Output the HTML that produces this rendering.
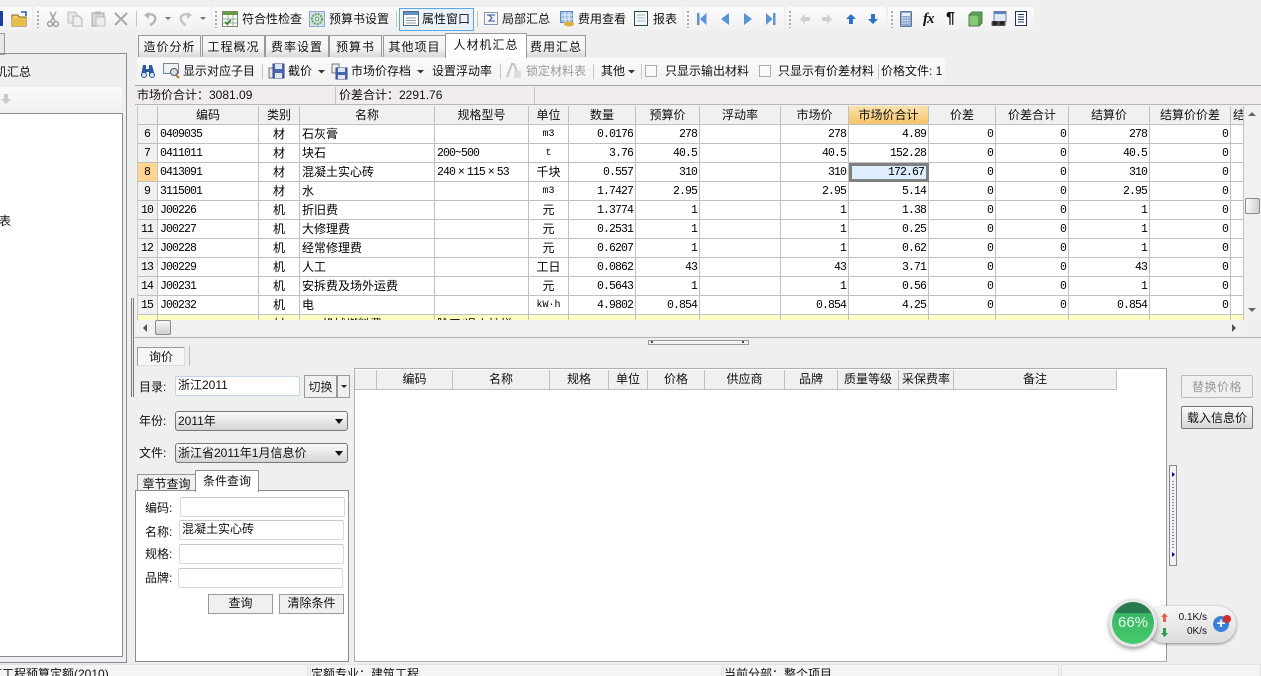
<!DOCTYPE html>
<html lang="zh"><head><meta charset="utf-8"><title>人材机汇总</title>
<style>
html,body{margin:0;padding:0}
body{width:1261px;height:676px;overflow:hidden;background:#f0efef;position:relative;font:12px/14px "Liberation Sans","Noto Sans CJK SC",sans-serif;color:#111}
.a{position:absolute;white-space:nowrap}
.t{position:absolute;white-space:nowrap;line-height:14px;height:14px}
.g{position:absolute;top:7px;height:23px;background:linear-gradient(#fcfcfc,#f1f1f1);border-radius:3px}
.grip{position:absolute;width:2px;height:17px;background:repeating-linear-gradient(#aaa 0 2px,transparent 2px 4px)}
.sep{position:absolute;width:1px;background:#c6c6c6}
svg{position:absolute;overflow:visible}
.tab{position:absolute;top:35px;height:21px;border:1px solid #999;border-bottom:0;background:linear-gradient(#f6f6f6 55%,#d8d8d8);text-align:center;line-height:22px;letter-spacing:1px;box-sizing:content-box}
#grid{position:absolute;left:137px;top:106px;width:1107px;height:214px;overflow:hidden;background:#fff;border-left:1px solid #c8c8c8;box-sizing:border-box}
#grid table{border-collapse:separate;border-spacing:0;table-layout:fixed;width:1107px;margin-left:-1px}
#grid td,#grid th{height:19px;box-sizing:border-box;border-right:1px solid #c0c0c0;border-bottom:1px solid #c0c0c0;padding:0 2px;overflow:hidden;white-space:nowrap;font-weight:400;font-size:12px;line-height:17px}
#grid th{background:#f0f0f0;text-align:center}
#grid td{font-family:"Liberation Mono","Noto Sans CJK SC",monospace;font-size:11.500px;letter-spacing:-.9px;background:#fff;color:#000}
#grid td.h{background:#f0f0f0;text-align:center}
#grid td.c{text-align:center;font-family:"Liberation Sans","Noto Sans CJK SC",sans-serif;font-size:12px;letter-spacing:0}
#grid td.z{font-family:"Liberation Sans","Noto Sans CJK SC",sans-serif;font-size:12px;letter-spacing:0}
#grid td.u{text-align:center;font-size:10px;letter-spacing:0}
#grid td.r{text-align:right}
#grid tr.y td{background:#ffffc4}
.x{font-family:"Liberation Sans",sans-serif;margin:0 3px}
.inp{position:absolute;background:#fff;border:1px solid #d5dbe6;border-top-color:#c4c8d0;border-radius:2px;box-sizing:border-box;padding-left:2px;line-height:16px}
.sel{position:absolute;box-sizing:border-box;border:1px solid #777;border-radius:3px;background:linear-gradient(#fafafa,#d4d4d4);line-height:18px;padding-left:2px}
.sel:after{content:"";position:absolute;right:4px;top:7px;border:4px solid transparent;border-top:5px solid #111;border-bottom:0}
.btn{position:absolute;box-sizing:border-box;border:1px solid #999;background:#f0f0f0;text-align:center;line-height:17px}
.hd{position:absolute;top:370px;height:20px;box-sizing:border-box;border-right:1px solid #c0c0c0;border-bottom:1px solid #c0c0c0;background:#f0f0f0;text-align:center;line-height:19px}
.st{position:absolute;top:664px;height:12px;background:#f4f4f4;border:1px solid #e2e2e2;border-bottom:0;box-sizing:border-box;line-height:19px;overflow:hidden;white-space:nowrap}
</style></head><body>

<!-- top toolbar -->
<div class="g" style="left:0;width:32px"></div>
<div class="g" style="left:34px;width:177px"></div>
<div class="g" style="left:212px;width:470px"></div>
<div class="g" style="left:684px;width:100px"></div>
<div class="g" style="left:786px;width:100px"></div>
<div class="g" style="left:888px;width:146px"></div>
<div class="grip" style="left:37px;top:11px"></div>
<div class="grip" style="left:215px;top:11px"></div>
<div class="grip" style="left:687px;top:11px"></div>
<div class="grip" style="left:789px;top:11px"></div>
<div class="grip" style="left:891px;top:11px"></div>
<div class="sep" style="left:136px;top:11px;height:16px"></div>
<div class="sep" style="left:396px;top:11px;height:16px"></div>
<div class="sep" style="left:477px;top:11px;height:16px"></div>

<svg style="left:0;top:10px" width="4" height="18"><rect x="-3" y="1" width="6" height="15" rx="1" fill="#1c3f9c"/></svg>
<svg style="left:11px;top:11px" width="17" height="16"><path d="M1 4h6l1 2h7v9H1z" fill="#f1cf63" stroke="#7d6a2a"/><path d="M1 7h14v8H1z" fill="#e8bd4b"/><path d="M10 1h5v4" fill="none" stroke="#2b58b6" stroke-width="1.6"/></svg>
<svg style="left:47px;top:11px" width="12" height="17"><path d="M3 1l5 9M9 1L4 10" stroke="#a8a8a8" stroke-width="1.6" fill="none"/><circle cx="3" cy="13" r="2.4" fill="none" stroke="#999" stroke-width="1.4"/><circle cx="9" cy="13" r="2.4" fill="none" stroke="#999" stroke-width="1.4"/></svg>
<svg style="left:67px;top:11px" width="16" height="16"><path d="M1 1h7l2 2v9H1z" fill="#e8e8e8" stroke="#bdbdbd"/><path d="M6 5h6l3 3v7H6z" fill="#eee" stroke="#b5b5b5"/></svg>
<svg style="left:91px;top:11px" width="15" height="16"><rect x="1" y="2" width="12" height="13" fill="#d8d8d8" stroke="#aaa"/><rect x="4" y="0.5" width="6" height="3" fill="#bbb"/><rect x="5" y="6" width="9" height="9" fill="#eee" stroke="#bbb"/></svg>
<svg style="left:114px;top:12px" width="14" height="14"><path d="M1 1l12 12M13 1L1 13" stroke="#a9a9a9" stroke-width="2"/></svg>
<svg style="left:144px;top:12px" width="13" height="15"><path d="M3 3c6-2 9 1 8 5-1 3-3 4-5 5" fill="none" stroke="#b4b4b4" stroke-width="2.4"/><path d="M0 3l5-3v7z" fill="#b4b4b4"/></svg>
<svg style="left:165px;top:17px" width="6" height="4"><path d="M0 0h6L3 3z" fill="#777"/></svg>
<svg style="left:179px;top:12px" width="13" height="15"><path d="M10 3C4 1 1 4 2 8c1 3 3 4 5 5" fill="none" stroke="#c4c4c4" stroke-width="2.4"/><path d="M13 3L8 0v7z" fill="#c4c4c4"/></svg>
<svg style="left:200px;top:17px" width="6" height="4"><path d="M0 0h6L3 3z" fill="#777"/></svg>

<svg style="left:222px;top:11px" width="17" height="16"><rect x=".5" y=".5" width="15" height="15" fill="#fff" stroke="#7a8a6a"/><rect x="1" y="1" width="14" height="3" fill="#5f9e3c"/><path d="M1 8h14M1 12h14M6 4v11M11 4v11" stroke="#9aa" /><path d="M3 11l2 2 4-4" stroke="#2a8a1f" stroke-width="1.6" fill="none"/></svg>
<div class="t" style="left:242px;top:12px">符合性检查</div>
<svg style="left:309px;top:11px" width="17" height="16"><rect x=".5" y=".5" width="15" height="15" fill="#cfe2f2" stroke="#8ba9c5"/><circle cx="8" cy="8" r="5" fill="none" stroke="#6fa348" stroke-width="2" stroke-dasharray="2 1"/><circle cx="8" cy="8" r="1.7" fill="#fff" stroke="#6fa348"/></svg>
<div class="t" style="left:329px;top:12px">预算书设置</div>
<div class="a" style="left:399px;top:8px;width:75px;height:23px;box-sizing:border-box;border:1px solid #5ba7e3;background:#eaf3fb"></div>
<svg style="left:403px;top:11px" width="17" height="16"><rect x=".5" y=".5" width="15" height="14" fill="#fff" stroke="#59677a"/><rect x="1" y="1" width="14" height="3" fill="#5e91c7"/><path d="M3 7h10M3 9.500h10M3 12h10" stroke="#8a97a6"/></svg>
<div class="t" style="left:422px;top:12px">属性窗口</div>
<svg style="left:484px;top:12px" width="15" height="14"><rect x=".5" y=".5" width="13" height="12" fill="#f4f4f4" stroke="#8896ad"/><path d="M3 3h8M5 3l3 3-3 3h6" fill="none" stroke="#2a52a8"/></svg>
<div class="t" style="left:502px;top:12px">局部汇总</div>
<svg style="left:560px;top:11px" width="15" height="16"><rect x=".5" y=".5" width="12" height="11" fill="#9fbfe5" stroke="#5f86bd"/><path d="M1 4h12M1 8h12M5 1v11M9 1v11" stroke="#e6effa"/><ellipse cx="9" cy="13" rx="5" ry="2.500" fill="#e0ae3d"/></svg>
<div class="t" style="left:578px;top:12px">费用查看</div>
<svg style="left:634px;top:11px" width="15" height="16"><rect x=".5" y=".5" width="13" height="14" fill="#f3f6f8" stroke="#24503a"/><path d="M3 4h8M3 7h8M3 10h8" stroke="#a7bbd0"/></svg>
<div class="t" style="left:653px;top:12px">报表</div>

<svg style="left:697px;top:12px" width="10" height="14"><path d="M0 1h2.500v12H0z" fill="#5b93d8"/><path d="M9.500 1v12L3 7z" fill="#5b93d8"/></svg>
<svg style="left:721px;top:12px" width="9" height="14"><path d="M8 1v12L0 7z" fill="#5b93d8"/></svg>
<svg style="left:744px;top:12px" width="9" height="14"><path d="M0 1v12l8-6z" fill="#5b93d8"/></svg>
<svg style="left:766px;top:12px" width="10" height="14"><path d="M0 1v12l6.500-6z" fill="#5b93d8"/><path d="M7 1h2.500v12H7z" fill="#5b93d8"/></svg>
<svg style="left:800px;top:14px" width="11" height="10"><path d="M0 5l5-5v3h5v4H5v3z" fill="#d0d0d0"/></svg>
<svg style="left:822px;top:14px" width="11" height="10"><path d="M10 5L5 0v3H0v4h5v3z" fill="#d0d0d0"/></svg>
<svg style="left:846px;top:14px" width="10" height="11"><path d="M5 0l5 5H7v5H3V5H0z" fill="#2f72c9"/></svg>
<svg style="left:868px;top:14px" width="10" height="11"><path d="M5 10l5-5H7V0H3v5H0z" fill="#2f72c9"/></svg>

<svg style="left:900px;top:11px" width="13" height="16"><rect x=".5" y=".5" width="11" height="15" rx="1" fill="#8fa9cf" stroke="#5f7696"/><rect x="2" y="2" width="8" height="3" fill="#e5eefa"/><path d="M2 7h8M2 9.500h8M2 12h8" stroke="#fff" stroke-dasharray="1.500 1"/></svg>
<div class="t" style="left:923px;top:11px;font:italic 700 15px/16px 'Liberation Serif',serif;letter-spacing:-1px">fx</div>
<div class="t" style="left:946px;top:10px;font:700 16px/17px 'Liberation Sans',sans-serif">¶</div>
<svg style="left:968px;top:11px" width="15" height="16"><path d="M1 4l3-3h10v11l-3 3H1z" fill="#5dab55" stroke="#4c7a48"/><path d="M1 4h10v11H1z" fill="#86c876" stroke="#4c7a48"/></svg>
<svg style="left:991px;top:11px" width="16" height="16"><rect x="3" y=".5" width="12" height="10" fill="#dfe8f5" stroke="#6a7fa5"/><rect x="3.500" y="1" width="11" height="2" fill="#5a86c8"/><rect x="0.500" y="10" width="14" height="5" rx="1" fill="#4a4a4a"/><circle cx="4" cy="12" r="2" fill="#222"/><circle cx="11" cy="12" r="2" fill="#222"/></svg>
<svg style="left:1015px;top:11px" width="13" height="16"><rect x=".5" y=".5" width="11" height="14" fill="#fff" stroke="#1c3466"/><path d="M3 3.500h6M3 6h6M3 8.500h6M3 11h6" stroke="#1c3466"/></svg>

<!-- left panel -->
<div class="a" style="left:-2px;top:33px;width:5px;height:20px;border:1px solid #999;background:#e8e8e8"></div>
<div class="a" style="left:-2px;top:53px;width:128px;height:608px;border:1px solid #8c8c94;border-left:0"></div>
<div class="a" style="left:0;top:58px;width:123px;height:28px;background:#efefef"></div>
<div class="t" style="left:0;top:65px;width:32px;overflow:hidden;text-indent:-17px">人机汇总</div>
<div class="a" style="left:0;top:87px;width:122px;height:25px;background:linear-gradient(#fafafa,#f0f0f0)"></div>
<svg style="left:1px;top:94px" width="10" height="11"><path d="M5 10l5-5H7V0H3v5H0z" fill="#c9c9c9"/></svg>
<div class="a" style="left:0;top:113px;width:123px;height:544px;background:#fff;border-top:1px solid #8c8c94;border-right:1px solid #8c8c94;border-bottom:1px solid #8c8c94;box-sizing:border-box"></div>
<div class="t" style="left:-1px;top:214px">表</div>
<div class="a" style="left:131px;top:298px;width:1px;height:99px;border-left:1px solid #777;border-right:1px solid #777"></div>

<!-- tabs -->
<div class="tab" style="left:138px;width:61px">造价分析</div>
<div class="tab" style="left:202px;width:61px">工程概况</div>
<div class="tab" style="left:265px;width:62px">费率设置</div>
<div class="tab" style="left:329px;width:51px">预算书</div>
<div class="tab" style="left:383px;width:61px">其他项目</div>
<div class="tab" style="left:445px;top:33px;width:80px;height:24px;background:#fff;z-index:2">人材机汇总</div>
<div class="tab" style="left:526px;width:58px">费用汇总</div>

<!-- second toolbar -->
<div class="a" style="left:137px;top:58px;width:808px;height:26px;background:linear-gradient(#fbfbfb,#f1f1f1);border-radius:3px"></div>
<svg style="left:140px;top:64px" width="16" height="14"><path d="M3 1h3v4h3V1h3l3 11H9V8H6.500v4H1z" fill="#2c5aa0"/><circle cx="4" cy="11" r="2.500" fill="#d5e3f5" stroke="#2c5aa0"/><circle cx="12" cy="11" r="2.500" fill="#d5e3f5" stroke="#2c5aa0"/></svg>
<svg style="left:163px;top:63px" width="18" height="16"><rect x=".5" y=".5" width="15" height="10" fill="#eef2f7" stroke="#7b8794"/><circle cx="11" cy="9" r="3.500" fill="#cfe0ee" stroke="#555"/><path d="M13 12l3 3" stroke="#a8752a" stroke-width="2"/></svg>
<div class="t" style="left:183px;top:64px">显示对应子目</div>
<div class="sep" style="left:262px;top:64px;height:15px"></div>
<svg style="left:268px;top:63px" width="17" height="17"><path d="M1 5h5v10H1z" fill="#e5e5e5" stroke="#777"/><rect x="5" y="1" width="11" height="14" fill="#4a66b2" stroke="#314a8c"/><rect x="7" y="1" width="7" height="5" fill="#dbe3f5"/><rect x="7" y="10" width="7" height="5" fill="#e6e6e6"/></svg>
<div class="t" style="left:288px;top:64px">截价</div>
<svg style="left:318px;top:70px" width="7" height="4"><path d="M0 0h7L3.500 3.500z" fill="#333"/></svg>
<svg style="left:331px;top:63px" width="17" height="17"><path d="M1 1h7v9H1z" fill="#eee" stroke="#777"/><rect x="5" y="5" width="11" height="11" fill="#4a66b2" stroke="#314a8c"/><rect x="7" y="5" width="7" height="4" fill="#dbe3f5"/><rect x="7" y="12" width="7" height="4" fill="#e6e6e6"/></svg>
<div class="t" style="left:351px;top:64px">市场价存档</div>
<svg style="left:417px;top:70px" width="7" height="4"><path d="M0 0h7L3.500 3.500z" fill="#333"/></svg>
<div class="t" style="left:432px;top:64px">设置浮动率</div>
<div class="sep" style="left:500px;top:64px;height:15px"></div>
<svg style="left:506px;top:63px" width="15" height="16"><path d="M1 14L6 1h2l5 13" fill="none" stroke="#c4c4c4" stroke-width="2"/><rect x="8" y="8" width="7" height="7" fill="#ddd"/></svg>
<div class="t" style="left:526px;top:64px;color:#9a9a9a">锁定材料表</div>
<div class="sep" style="left:593px;top:64px;height:15px"></div>
<div class="t" style="left:601px;top:64px">其他</div>
<svg style="left:628px;top:70px" width="7" height="4"><path d="M0 0h7L3.500 3.500z" fill="#333"/></svg>
<div class="sep" style="left:641px;top:64px;height:15px"></div>
<div class="a" style="left:645px;top:65px;width:10px;height:10px;border:1px solid #aaa;background:#fafafa"></div>
<div class="t" style="left:665px;top:64px">只显示输出材料</div>
<div class="a" style="left:759px;top:65px;width:10px;height:10px;border:1px solid #aaa;background:#fafafa"></div>
<div class="t" style="left:778px;top:64px">只显示有价差材料</div>
<div class="sep" style="left:878px;top:64px;height:15px"></div>
<div class="t" style="left:881px;top:64px">价格文件: 1</div>

<!-- summary -->
<div class="a" style="left:135px;top:85px;width:1126px;height:1px;background:#a8a8a8"></div>
<div class="a" style="left:135px;top:86px;width:1126px;height:18px;background:#f0ecec"></div>
<div class="a" style="left:135px;top:104px;width:1126px;height:1px;background:#b8b8b8"></div>
<div class="sep" style="left:335px;top:87px;height:17px"></div>
<div class="sep" style="left:534px;top:87px;height:17px"></div>
<div class="t" style="left:137px;top:88px">市场价合计：3081.09</div>
<div class="t" style="left:339px;top:88px">价差合计：2291.76</div>

<!-- main grid -->
<div id="grid"><table>
<colgroup><col style="width:21px"><col style="width:101px"><col style="width:41px"><col style="width:135px"><col style="width:94px"><col style="width:40px"><col style="width:67px"><col style="width:64px"><col style="width:81px"><col style="width:68px"><col style="width:80px"><col style="width:67px"><col style="width:73px"><col style="width:81px"><col style="width:81px"><col style="width:13px"></colgroup>
<tr><th></th><th>编码</th><th>类别</th><th>名称</th><th>规格型号</th><th>单位</th><th>数量</th><th>预算价</th><th>浮动率</th><th>市场价</th><th style="background:linear-gradient(#fbe3ad,#f5c468)">市场价合计</th><th>价差</th><th>价差合计</th><th>结算价</th><th>结算价价差</th><th>结</th></tr>
<tr><td class="h">6</td><td>0409035</td><td class="c">材</td><td class="z">石灰膏</td><td></td><td class="u">m3</td><td class="r">0.0176</td><td class="r">278</td><td></td><td class="r">278</td><td class="r">4.89</td><td class="r">0</td><td class="r">0</td><td class="r">278</td><td class="r">0</td><td></td></tr>
<tr><td class="h">7</td><td>0411011</td><td class="c">材</td><td class="z">块石</td><td>200~500</td><td class="u">t</td><td class="r">3.76</td><td class="r">40.5</td><td></td><td class="r">40.5</td><td class="r">152.28</td><td class="r">0</td><td class="r">0</td><td class="r">40.5</td><td class="r">0</td><td></td></tr>
<tr><td class="h" style="background:#ffd591">8</td><td>0413091</td><td class="c">材</td><td class="z">混凝土实心砖</td><td>240<span class="x">×</span>115<span class="x">×</span>53</td><td class="c">千块</td><td class="r">0.557</td><td class="r">310</td><td></td><td class="r">310</td><td class="r" style="background:#deeeff;outline:3px solid #808080;outline-offset:-3px;padding-right:4px">172.67</td><td class="r">0</td><td class="r">0</td><td class="r">310</td><td class="r">0</td><td></td></tr>
<tr><td class="h">9</td><td>3115001</td><td class="c">材</td><td class="z">水</td><td></td><td class="u">m3</td><td class="r">1.7427</td><td class="r">2.95</td><td></td><td class="r">2.95</td><td class="r">5.14</td><td class="r">0</td><td class="r">0</td><td class="r">2.95</td><td class="r">0</td><td></td></tr>
<tr><td class="h">10</td><td>J00226</td><td class="c">机</td><td class="z">折旧费</td><td></td><td class="c">元</td><td class="r">1.3774</td><td class="r">1</td><td></td><td class="r">1</td><td class="r">1.38</td><td class="r">0</td><td class="r">0</td><td class="r">1</td><td class="r">0</td><td></td></tr>
<tr><td class="h">11</td><td>J00227</td><td class="c">机</td><td class="z">大修理费</td><td></td><td class="c">元</td><td class="r">0.2531</td><td class="r">1</td><td></td><td class="r">1</td><td class="r">0.25</td><td class="r">0</td><td class="r">0</td><td class="r">1</td><td class="r">0</td><td></td></tr>
<tr><td class="h">12</td><td>J00228</td><td class="c">机</td><td class="z">经常修理费</td><td></td><td class="c">元</td><td class="r">0.6207</td><td class="r">1</td><td></td><td class="r">1</td><td class="r">0.62</td><td class="r">0</td><td class="r">0</td><td class="r">1</td><td class="r">0</td><td></td></tr>
<tr><td class="h">13</td><td>J00229</td><td class="c">机</td><td class="z">人工</td><td></td><td class="c">工日</td><td class="r">0.0862</td><td class="r">43</td><td></td><td class="r">43</td><td class="r">3.71</td><td class="r">0</td><td class="r">0</td><td class="r">43</td><td class="r">0</td><td></td></tr>
<tr><td class="h">14</td><td>J00231</td><td class="c">机</td><td class="z">安拆费及场外运费</td><td></td><td class="c">元</td><td class="r">0.5643</td><td class="r">1</td><td></td><td class="r">1</td><td class="r">0.56</td><td class="r">0</td><td class="r">0</td><td class="r">1</td><td class="r">0</td><td></td></tr>
<tr><td class="h">15</td><td>J00232</td><td class="c">机</td><td class="z">电</td><td></td><td class="u" style="padding:0">kW·h</td><td class="r">4.9802</td><td class="r">0.854</td><td></td><td class="r">0.854</td><td class="r">4.25</td><td class="r">0</td><td class="r">0</td><td class="r">0.854</td><td class="r">0</td><td></td></tr>
<tr class="y"><td class="h"></td><td></td><td class="c">材</td><td class="z">&nbsp;&nbsp;&nbsp;&nbsp;&nbsp;&nbsp;机械燃料费</td><td class="z">险工/退火护栏</td><td></td><td></td><td></td><td></td><td></td><td></td><td></td><td></td><td></td><td></td><td></td></tr>
</table></div>

<!-- scrollbars -->
<div class="a" style="left:1244px;top:106px;width:16px;height:214px;background:#f1f1f1"></div>
<svg style="left:1248px;top:112px" width="8" height="5"><path d="M0 4h8L4 0z" fill="#666"/></svg>
<svg style="left:1248px;top:308px" width="8" height="5"><path d="M0 0h8L4 4z" fill="#666"/></svg>
<div class="a" style="left:1245px;top:198px;width:13px;height:14px;border:1px solid #8a8a8a;border-radius:2px;background:linear-gradient(90deg,#fafafa,#cfcfcf)"></div>
<div class="a" style="left:137px;top:320px;width:1105px;height:16px;background:#f1f1f1"></div>
<svg style="left:143px;top:324px" width="5" height="8"><path d="M4 0v8L0 4z" fill="#555"/></svg>
<svg style="left:1232px;top:324px" width="5" height="8"><path d="M0 0v8l4-4z" fill="#555"/></svg>
<div class="a" style="left:155px;top:320px;width:14px;height:13px;border:1px solid #8a8a8a;border-radius:2px;background:linear-gradient(#f8f8f8,#cfcfcf)"></div>
<div class="a" style="left:135px;top:337px;width:1126px;height:1px;background:#b0b0b0"></div>
<div class="a" style="left:648px;top:340px;width:99px;height:3px;border:1px solid #999;background:#f2f2f2"></div>
<div class="a" style="left:651px;top:341px;width:2px;height:2px;background:#445"></div>
<div class="a" style="left:742px;top:341px;width:2px;height:2px;background:#445"></div>

<!-- lower left -->
<div class="a" style="left:137px;top:347px;width:46px;height:17px;border:1px solid #999;border-right-color:#ddd;border-bottom-color:#ddd;background:#f6f6f6;text-align:center;line-height:18px">询价</div>
<div class="sep" style="left:189px;top:346px;height:20px;background:#bbb"></div>
<div class="t" style="left:139px;top:380px">目录:</div>
<div class="inp" style="left:175px;top:376px;width:125px;height:20px;border-color:#c5d5e6">浙江2011</div>
<div class="btn" style="left:304px;top:375px;width:33px;height:23px;line-height:22px;color:#222">切换</div>
<div class="btn" style="left:337px;top:375px;width:13px;height:23px"></div>
<svg style="left:341px;top:385px" width="6" height="4"><path d="M0 0h6L3 3z" fill="#222"/></svg>
<div class="t" style="left:139px;top:414px">年份:</div>
<div class="sel" style="left:175px;top:411px;width:173px;height:20px">2011年</div>
<div class="t" style="left:139px;top:446px">文件:</div>
<div class="sel" style="left:175px;top:443px;width:173px;height:20px">浙江省2011年1月信息价</div>
<div class="a" style="left:137px;top:474px;width:57px;height:17px;border:1px solid #999;border-bottom:0;background:#f0f0f0;text-align:center;line-height:19px">章节查询</div>
<div class="a" style="left:135px;top:490px;width:212px;height:170px;border:1px solid #8c8c94;background:#fff"></div>
<div class="a" style="left:195px;top:470px;width:62px;height:21px;border:1px solid #8c8c94;border-bottom:0;background:#fff;text-align:center;line-height:20px;z-index:2">条件查询</div>
<div class="t" style="left:145px;top:501px">编码:</div>
<div class="inp" style="left:180px;top:497px;width:165px;height:20px"></div>
<div class="t" style="left:145px;top:525px">名称:</div>
<div class="inp" style="left:179px;top:520px;width:165px;height:20px">混凝土实心砖</div>
<div class="t" style="left:145px;top:547px">规格:</div>
<div class="inp" style="left:179px;top:544px;width:165px;height:20px"></div>
<div class="t" style="left:145px;top:571px">品牌:</div>
<div class="inp" style="left:178px;top:568px;width:165px;height:20px"></div>
<div class="btn" style="left:208px;top:594px;width:65px;height:20px">查询</div>
<div class="btn" style="left:279px;top:594px;width:65px;height:20px">清除条件</div>

<!-- lower right table -->
<div class="a" style="left:354px;top:368px;width:813px;height:294px;background:#fff;border:1px solid #b0b0b0;border-right-color:#999;box-sizing:border-box"></div>
<div class="hd" style="left:355px;width:22px"></div>
<div class="hd" style="left:377px;width:76px">编码</div>
<div class="hd" style="left:453px;width:97px">名称</div>
<div class="hd" style="left:550px;width:59px">规格</div>
<div class="hd" style="left:609px;width:39px">单位</div>
<div class="hd" style="left:648px;width:57px">价格</div>
<div class="hd" style="left:705px;width:80px">供应商</div>
<div class="hd" style="left:785px;width:53px">品牌</div>
<div class="hd" style="left:838px;width:61px">质量等级</div>
<div class="hd" style="left:899px;width:55px">采保费率</div>
<div class="hd" style="left:954px;width:163px">备注</div>

<!-- right buttons -->
<div class="btn" style="left:1181px;top:375px;width:72px;height:23px;border-color:#bbb;border-radius:2px;line-height:22px;color:#9a9a9a;letter-spacing:.5px">替换价格</div>
<div class="btn" style="left:1181px;top:406px;width:72px;height:23px;border-color:#777;border-radius:2px;line-height:22px;background:linear-gradient(#fafafa,#d8d8d8)">载入信息价</div>
<div class="a" style="left:1169px;top:465px;width:6px;height:99px;border:1px solid #888;background:#f2f2f2"></div>
<svg style="left:1172px;top:472px" width="3" height="85"><path d="M0 0l3 2.500L0 5zM0 80l3 2.500L0 85z" fill="#0a0a8a"/><path d="M1 9v68" stroke="#0a0a8a" stroke-dasharray="1 2"/></svg>

<!-- status -->
<div class="st" style="left:-2px;width:310px;text-indent:-9px">筑工程预算定额(2010)</div>
<div class="st" style="left:310px;width:412px">定额专业：建筑工程</div>
<div class="st" style="left:723px;width:336px">当前分部：整个项目</div>
<div class="st" style="left:1061px;width:200px"></div>

<!-- widget -->
<div class="a" style="left:1146px;top:606px;width:90px;height:37px;border-radius:19px;background:linear-gradient(#f6f6f6,#dcdcdc);box-shadow:0 1px 3px rgba(0,0,0,.45)"></div>
<div class="a" style="left:1109px;top:599px;width:48px;height:48px;border-radius:50%;background:#e6e6e6;box-shadow:0 2px 5px rgba(0,0,0,.4)"></div>
<div class="a" style="left:1112px;top:602px;width:42px;height:42px;border-radius:50%;background:linear-gradient(#2a7a50 0,#2a7a50 26%,#37b765 27%,#47c96d 100%);color:#eafbea;text-align:center;font:15px/42px 'Liberation Sans',sans-serif">66%</div>
<svg style="left:1161px;top:613px" width="7" height="9"><path d="M3.500 0L7 4H5v5H2V4H0z" fill="#e8604a"/></svg>
<svg style="left:1161px;top:628px" width="7" height="9"><path d="M3.500 9L7 5H5V0H2v5H0z" fill="#2f9a58"/></svg>
<div class="a" style="left:1167px;top:612px;width:40px;text-align:right;font:10px/12px 'Liberation Sans',sans-serif;color:#111">0.1K/s</div>
<div class="a" style="left:1167px;top:626px;width:40px;text-align:right;font:10px/12px 'Liberation Sans',sans-serif;color:#111">0K/s</div>
<div class="a" style="left:1213px;top:616px;width:16px;height:16px;border-radius:50%;background:#3a7fd8;color:#fff;text-align:center;font:700 15px/15px 'Liberation Sans',sans-serif">+</div>
<div class="a" style="left:1223px;top:615px;width:8px;height:8px;border-radius:50%;background:#d92a2a"></div>
</body></html>
